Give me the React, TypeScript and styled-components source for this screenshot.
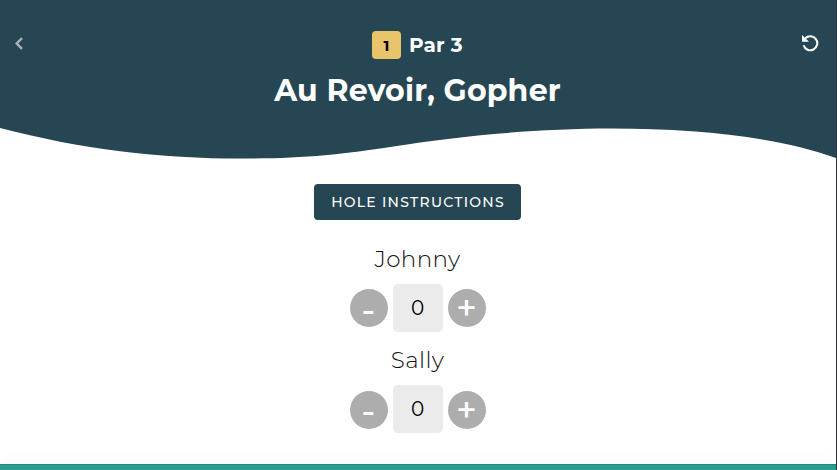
import React, { useState } from "react";
import styled, { createGlobalStyle } from "styled-components";

const GlobalStyle = createGlobalStyle`
  * { box-sizing: border-box; }
  body {
    margin: 0;
    background: #fff;
    color: #111;
    font-family: Montserrat, Inter, "Open Sans", sans-serif;
    overflow: hidden;
  }
  button { font-family: inherit; border: 0; padding: 0; cursor: pointer; }
`;

const Screen = styled.div`
  height: 470px;
  border-right: 1px solid #2d3236;
  display: flex;
  flex-direction: column;
`;

const Header = styled.header`
  height: 128px;
  flex: none;
  background: #264653;
  display: flex;
  justify-content: space-between;
  align-items: flex-start;
`;

const IconButton = styled.button<{ $dim?: boolean }>`
  width: 54px;
  height: 86px;
  flex: none;
  display: flex;
  align-items: center;
  justify-content: ${(p) => (p.$dim ? "flex-start" : "center")};
  padding-left: ${(p) => (p.$dim ? "14px" : "2px")};
  background: none;
  color: ${(p) => (p.$dim ? "#a8b5ba" : "#fff")};
`;

const Heading = styled.div`
  display: flex;
  flex-direction: column;
  align-items: center;
  padding-top: 31px;
  color: #fff;
`;

const ParRow = styled.div`
  display: flex;
  align-items: center;
  gap: 8px;
  height: 28px;
  font-weight: 700;
`;

const HoleBadge = styled.span`
  width: 29px;
  height: 28px;
  border-radius: 4px;
  background: #e9c46a;
  color: #000;
  display: flex;
  align-items: center;
  justify-content: center;
  font-size: 15px;
`;

const ParText = styled.span`
  width: 55px;
  white-space: nowrap;
  font-size: 20px;
  letter-spacing: 0.2px;
`;

const Title = styled.h1`
  margin: 13px 1px 0 0;
  font-size: 30px;
  line-height: 38px;
  font-weight: 700;
  letter-spacing: 0.17px;
  white-space: nowrap;
`;

const Wave = styled.svg`
  display: block;
  flex: none;
  width: 836px;
  height: 32px;
`;

const Main = styled.main`
  flex: 1;
  display: flex;
  flex-direction: column;
  align-items: center;
  padding: 24px 1px 0 0;
`;

const InstructionsButton = styled.button`
  width: 207px;
  height: 36px;
  flex: none;
  margin-bottom: 22px;
  padding-left: 1px;
  border-radius: 4px;
  background: #264653;
  color: #fff;
  font-size: 14px;
  font-weight: 500;
  letter-spacing: 1.25px;
  white-space: nowrap;
`;

const Player = styled.section`
  height: 101.3px;
  flex: none;
  display: flex;
  flex-direction: column;
  align-items: center;
`;

const Name = styled.h2`
  margin: 0 0 6px;
  height: 36px;
  font-size: 23px;
  line-height: 35px;
  font-weight: 300;
  letter-spacing: 0.4px;
`;

const Stepper = styled.div`
  display: flex;
  align-items: center;
  gap: 5px;
`;

const RoundButton = styled.button`
  width: 38px;
  height: 38px;
  margin-top: 0.8px;
  border-radius: 50%;
  background: #adadad;
  color: #fff;
  font-size: 36px;
  line-height: 34px;
  padding-bottom: 2px;
  font-weight: 500;
`;

const MinusButton = styled(RoundButton)`
  padding: 1px 0 0;
`;

const Score = styled.output`
  width: 50px;
  height: 48px;
  border-radius: 5px;
  background: #ebebeb;
  color: #000;
  display: flex;
  align-items: center;
  justify-content: center;
  font-size: 20px;
  font-weight: 400;
`;

const Footer = styled.footer`
  height: 6px;
  flex: none;
  background: #2a9d8f;
  border-top: 1px solid #278678;
  box-shadow: 0 -2px 14px rgba(0, 0, 0, 0.06);
`;

function PlayerScore({ name }: { name: string }) {
  const [score, setScore] = useState(0);
  return (
    <Player>
      <Name>{name}</Name>
      <Stepper>
        <MinusButton onClick={() => setScore(score - 1)}>-</MinusButton>
        <Score>{score}</Score>
        <RoundButton onClick={() => setScore(score + 1)}>+</RoundButton>
      </Stepper>
    </Player>
  );
}

export default function App() {
  return (
    <Screen>
      <GlobalStyle />
      <Header>
        <IconButton $dim aria-label="Back">
          <svg width="9" height="13" viewBox="0 0 9 13" fill="none" stroke="currentColor" strokeWidth="2.4">
            <path d="M8 1.2 2.7 6.5 8 11.8" />
          </svg>
        </IconButton>
        <Heading>
          <ParRow>
            <HoleBadge>1</HoleBadge>
            <ParText>Par 3</ParText>
          </ParRow>
          <Title>Au Revoir, Gopher</Title>
        </Heading>
        <IconButton aria-label="Reset">
          <svg width="18" height="18" viewBox="0 0 18 18" fill="none">
            <path d="M4.3 4.3A7 7 0 1 1 2.6 11.3" stroke="currentColor" strokeWidth="2.1" />
            <path d="M1 1v6.7h7Z" fill="currentColor" />
          </svg>
        </IconButton>
      </Header>
      <Wave viewBox="0 0 836 32">
        <path
          fill="#264653"
          d="M0-1V0C80 21 160 30.6 242 30.6C300 30.6 340 27 395 18.3C450 9.3 530 .6 612 .6C700 .6 780 9.5 836 30V-1Z"
        />
      </Wave>
      <Main>
        <InstructionsButton>HOLE INSTRUCTIONS</InstructionsButton>
        <PlayerScore name="Johnny" />
        <PlayerScore name="Sally" />
      </Main>
      <Footer />
    </Screen>
  );
}
